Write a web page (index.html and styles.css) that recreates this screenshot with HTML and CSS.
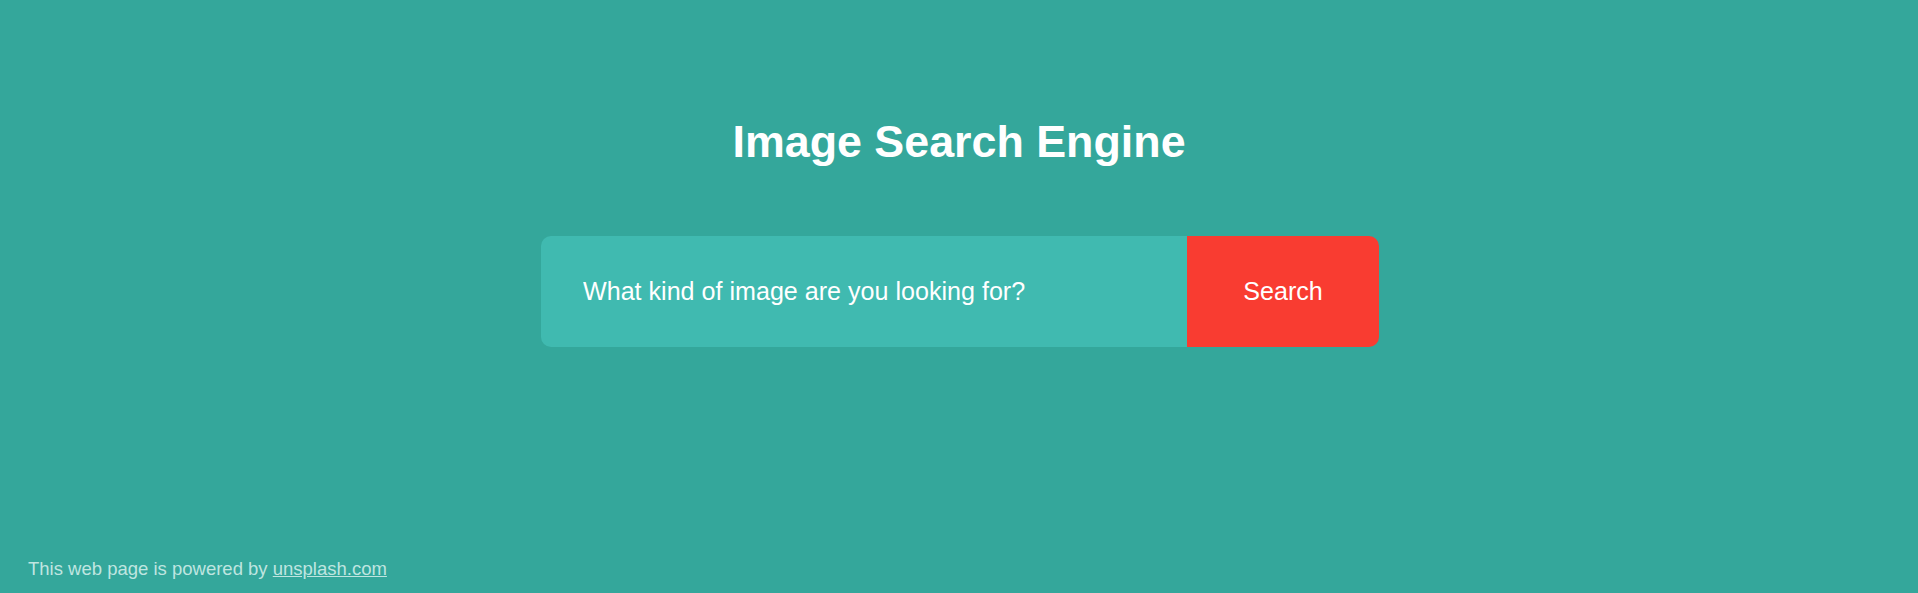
FILE: index.html
```html
<!DOCTYPE html>
<html lang="en">
<head>
<meta charset="utf-8">
<title>Image Search Engine</title>
<link rel="stylesheet" href="styles.css">
</head>
<body>
<main class="page">
  <h1 class="title">Image Search Engine</h1>
  <form class="search">
    <input class="search-input" type="text" placeholder="What kind of image are you looking for?">
    <button class="search-btn" type="button">Search</button>
  </form>
  <div class="results"></div>
  <footer class="footer">This web page is powered by <a href="#">unsplash.com</a></footer>
</main>
</body>
</html>
```
FILE: styles.css
```css
* { box-sizing: border-box; }
html, body { margin: 0; padding: 0; }
body {
  background: #34a79b;
  font-family: "Liberation Sans", Arial, sans-serif;
  color: #fff;
}
.page {
  min-height: 100vh;
  display: flex;
  flex-direction: column;
  align-items: center;
  padding-top: 116px;
}
.title {
  margin: 0;
  font-size: 44.8px;
  font-weight: bold;
  line-height: normal;
}
.search {
  margin-top: 69px;
  display: flex;
  width: 838px;
  height: 111px;
  margin-left: 2px;
}
.search-input {
  flex: 1;
  border: none;
  outline: none;
  background: #40bab0;
  border-radius: 10px 0 0 10px;
  padding: 0 42px;
  font-family: inherit;
  font-size: 25.1px;
  color: #fff;
}
.search-input::placeholder { color: #fff; opacity: 1; }
.search-btn {
  width: 192px;
  border: none;
  background: #f93c31;
  border-radius: 0 10px 10px 0;
  font-family: inherit;
  font-size: 25.1px;
  color: #fff;
  cursor: pointer;
}
.results { flex: 1; }
.footer {
  align-self: flex-start;
  padding: 0 0 13px 28px;
  font-size: 18.5px;
  color: #bfe5e0;
}
.footer a { color: #bfe5e0; }
```
